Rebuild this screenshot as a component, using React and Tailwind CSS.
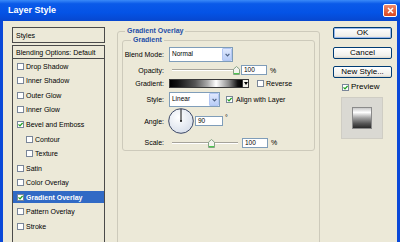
import React from 'react';

const styleItems = [
  { label: 'Drop Shadow' },
  { label: 'Inner Shadow' },
  { label: 'Outer Glow' },
  { label: 'Inner Glow' },
  { label: 'Bevel and Emboss', checked: true },
  { label: 'Contour', indent: true },
  { label: 'Texture', indent: true },
  { label: 'Satin' },
  { label: 'Color Overlay' },
  { label: 'Gradient Overlay', checked: true, selected: true },
  { label: 'Pattern Overlay' },
  { label: 'Stroke' },
];

const Check = ({ checked }) => (
  <span className="w-[7px] h-[7px] shrink-0 bg-white border border-[#7a8699] flex items-center justify-center">
    {checked && (
      <svg width="5" height="5" viewBox="0 0 5 5">
        <path d="M0.5 2.4 L2 3.9 L4.6 0.9" fill="none" stroke="#21a121" strokeWidth="1.3" />
      </svg>
    )}
  </span>
);

const Select = ({ value, w }) => (
  <div className={`${w} h-[15px] bg-white border border-[#7f9db9] flex items-center`}>
    <span className="flex-1 pl-[2px] text-[6.5px] leading-none">{value}</span>
    <span className="w-[10px] h-[13px] bg-[linear-gradient(to_bottom,#dfe8fd,#b9cdf7)] border border-[#b3c7f3] rounded-[1px] flex items-center justify-center">
      <svg width="5" height="4" viewBox="0 0 5 4">
        <path d="M0.6 0.8 L2.5 2.8 L4.4 0.8" fill="none" stroke="#4d6185" strokeWidth="1.2" />
      </svg>
    </span>
  </div>
);

const Thumb = () => (
  <svg width="7" height="9" viewBox="0 0 7 9">
    <path d="M0.5 3.2 L3.5 0.5 L6.5 3.2 L6.5 8.5 L0.5 8.5 Z" fill="#f3f3ee" stroke="#86a386" />
    <line x1="1" y1="7.6" x2="6" y2="7.6" stroke="#3cc43c" strokeWidth="1" />
  </svg>
);

const Slider = ({ thumb }) => (
  <div className="relative w-[72px] h-[10px]">
    <div className="absolute left-[3px] right-[3px] top-[4px] h-[2px] border-t border-t-[#a5a39a] border-b border-b-white" />
    <div className={`absolute top-[1px] ${thumb}`}>
      <Thumb />
    </div>
  </div>
);

const Field = ({ value, w }) => (
  <div className={`${w} h-[10px] bg-white border border-[#7f9db9] text-[6.5px] leading-[8px] pl-[2px]`}>{value}</div>
);

const Label = ({ children }) => (
  <span className="w-[42px] pr-[1px] text-right shrink-0">{children}</span>
);

const Btn = ({ children, focus, className = '' }) => (
  <button
    className={`w-[59px] h-[12px] rounded-[2px] border border-[#003c74] bg-[linear-gradient(to_bottom,#ffffff,#f0efea_80%,#d8d3c8)] text-[8px] leading-none text-black flex items-center justify-center ${focus ? 'shadow-[inset_0_0_0_1px_#9ab9ec]' : ''} ${className}`}
  >
    {children}
  </button>
);

export default function App() {
  return (
    <div className="w-[400px] h-[242px] overflow-hidden bg-[#0a48d8] flex flex-col font-['Liberation_Sans',Arial,sans-serif] text-black">
      {/* title bar */}
      <div className="h-[21px] shrink-0 flex items-center justify-between pl-[8px] pr-[3px] bg-[linear-gradient(to_bottom,#3a8af8_0%,#0a5ae9_18%,#0453e6_60%,#0747cf_100%)]">
        <span className="text-white font-bold text-[9px] leading-none">Layer Style</span>
        <div className="w-[14px] h-[13px] rounded-[2px] border border-white bg-[linear-gradient(to_bottom,#ef8a6c,#d9461f)] flex items-center justify-center">
          <svg width="7" height="7" viewBox="0 0 7 7">
            <path d="M1 1 L6 6 M6 1 L1 6" stroke="#fff" strokeWidth="1.5" />
          </svg>
        </div>
      </div>

      <div className="flex-1 mx-[3px] bg-[#ece9d8] flex items-start text-[7px] leading-none">
        {/* styles list */}
        <div className="ml-[9px] mt-[6px] w-[93px] flex flex-col">
          <div className="h-[16px] border border-[#4a4a4a] bg-[#ece9d8] px-[3px] flex items-center">Styles</div>
          <div className="mt-[2px] h-[14px] border border-[#4a4a4a] px-[3px] flex items-center">Blending Options: Default</div>
          <div className="border-x border-[#4a4a4a] h-[200px]">
            {styleItems.map((item) => (
              <div key={item.label} className="h-[14.57px] flex items-center">
                <div
                  className={`w-full h-[12px] flex items-center gap-[2px] ${item.indent ? 'pl-[13px]' : 'pl-[4px]'} ${item.selected ? 'bg-[#316ac5] text-white font-bold' : ''}`}
                >
                  <Check checked={item.checked} />
                  <span>{item.label}</span>
                </div>
              </div>
            ))}
          </div>
        </div>

        {/* gradient overlay group */}
        <fieldset className="ml-[12px] mt-[5px] w-[203px] h-[222px] border border-[#cdcabb] rounded-[3px]">
          <legend className="ml-[7px] px-[2px] leading-[10px] font-bold text-[#1e4fa8]">Gradient Overlay</legend>
          <fieldset className="mx-[4px] -mt-[1px] border border-[#cdcabb] rounded-[3px] pt-[2px] pb-[3px]">
            <legend className="ml-[8px] px-[2px] leading-[10px] font-bold text-[#1e4fa8]">Gradient</legend>

            <div className="h-[15px] flex items-center gap-[4px]">
              <Label>Blend Mode:</Label>
              <Select value="Normal" w="w-[64px]" />
            </div>

            <div className="mt-[3px] h-[10px] flex items-center">
              <Label>Opacity:</Label>
              <div className="ml-[4px]">
                <Slider thumb="left-[64px]" />
              </div>
              <Field value="100" w="w-[26px]" />
              <span className="ml-[3px]">%</span>
            </div>

            <div className="mt-[4px] h-[9px] flex items-center">
              <Label>Gradient:</Label>
              <div className="ml-[4px] w-[74px] h-[9px] border border-[#3a3a3a] bg-[linear-gradient(to_right,#000_0%,#111_10%,#555_35%,#aaa_52%,#fff_64%,#888_82%,#111_94%,#000_100%)]" />
              <div className="w-[6px] h-[9px] border border-[#3a3a3a] border-l-0 bg-[#f2f1ea] flex items-center justify-center">
                <svg width="4" height="3" viewBox="0 0 4 3">
                  <path d="M0 0 L4 0 L2 3 Z" fill="#000" />
                </svg>
              </div>
              <span className="ml-[8px] flex items-center gap-[2px]">
                <Check />
                <span>Reverse</span>
              </span>
            </div>

            <div className="mt-[4px] h-[15px] flex items-center">
              <Label>Style:</Label>
              <div className="ml-[4px]">
                <Select value="Linear" w="w-[51px]" />
              </div>
              <span className="ml-[6px] flex items-center gap-[3px]">
                <Check checked />
                <span>Align with Layer</span>
              </span>
            </div>

            <div className="mt-[1px] h-[26px] flex items-center">
              <Label>Angle:</Label>
              <svg className="ml-[3px]" width="26" height="26" viewBox="0 0 26 26">
                <defs>
                  <radialGradient id="dial" cx="40%" cy="35%" r="70%">
                    <stop offset="0%" stopColor="#ffffff" />
                    <stop offset="100%" stopColor="#d7deea" />
                  </radialGradient>
                </defs>
                <circle cx="13" cy="13" r="12.3" fill="url(#dial)" stroke="#3e4966" strokeWidth="1" />
                <line x1="13" y1="13" x2="13" y2="1" stroke="#111" strokeWidth="1" />
                <circle cx="13" cy="13" r="1" fill="#111" />
              </svg>
              <div className="ml-[1px]">
                <Field value="90" w="w-[28px]" />
              </div>
              <span className="ml-[2px] self-start mt-[6px]">°</span>
            </div>

            <div className="mt-[4px] h-[9px] flex items-center">
              <Label>Scale:</Label>
              <div className="ml-[4px]">
                <Slider thumb="left-[39px]" />
              </div>
              <div className="ml-[1px]">
                <Field value="100" w="w-[26px]" />
              </div>
              <span className="ml-[3px]">%</span>
            </div>
          </fieldset>
        </fieldset>

        {/* buttons */}
        <div className="ml-[13px] mt-[6px] w-[59px] flex flex-col">
          <Btn focus>OK</Btn>
          <Btn className="mt-[8px]">Cancel</Btn>
          <Btn className="mt-[7px]">New Style...</Btn>
          <div className="mt-[5px] ml-[9px] h-[8px] flex items-center gap-[2px] text-[8px]">
            <Check checked />
            <span>Preview</span>
          </div>
          <div className="mt-[6px] ml-[8px] w-[42px] h-[42px] bg-[#dad9d3] border border-[#cfcdc4] flex items-center justify-center">
            <div className="w-[20px] h-[22px] border border-[#8a8a8a] bg-[linear-gradient(to_bottom,#c8c8c8_0%,#ffffff_22%,#a0a0a0_50%,#555_78%,#2a2a2a_100%)]" />
          </div>
        </div>
      </div>
    </div>
  );
}
